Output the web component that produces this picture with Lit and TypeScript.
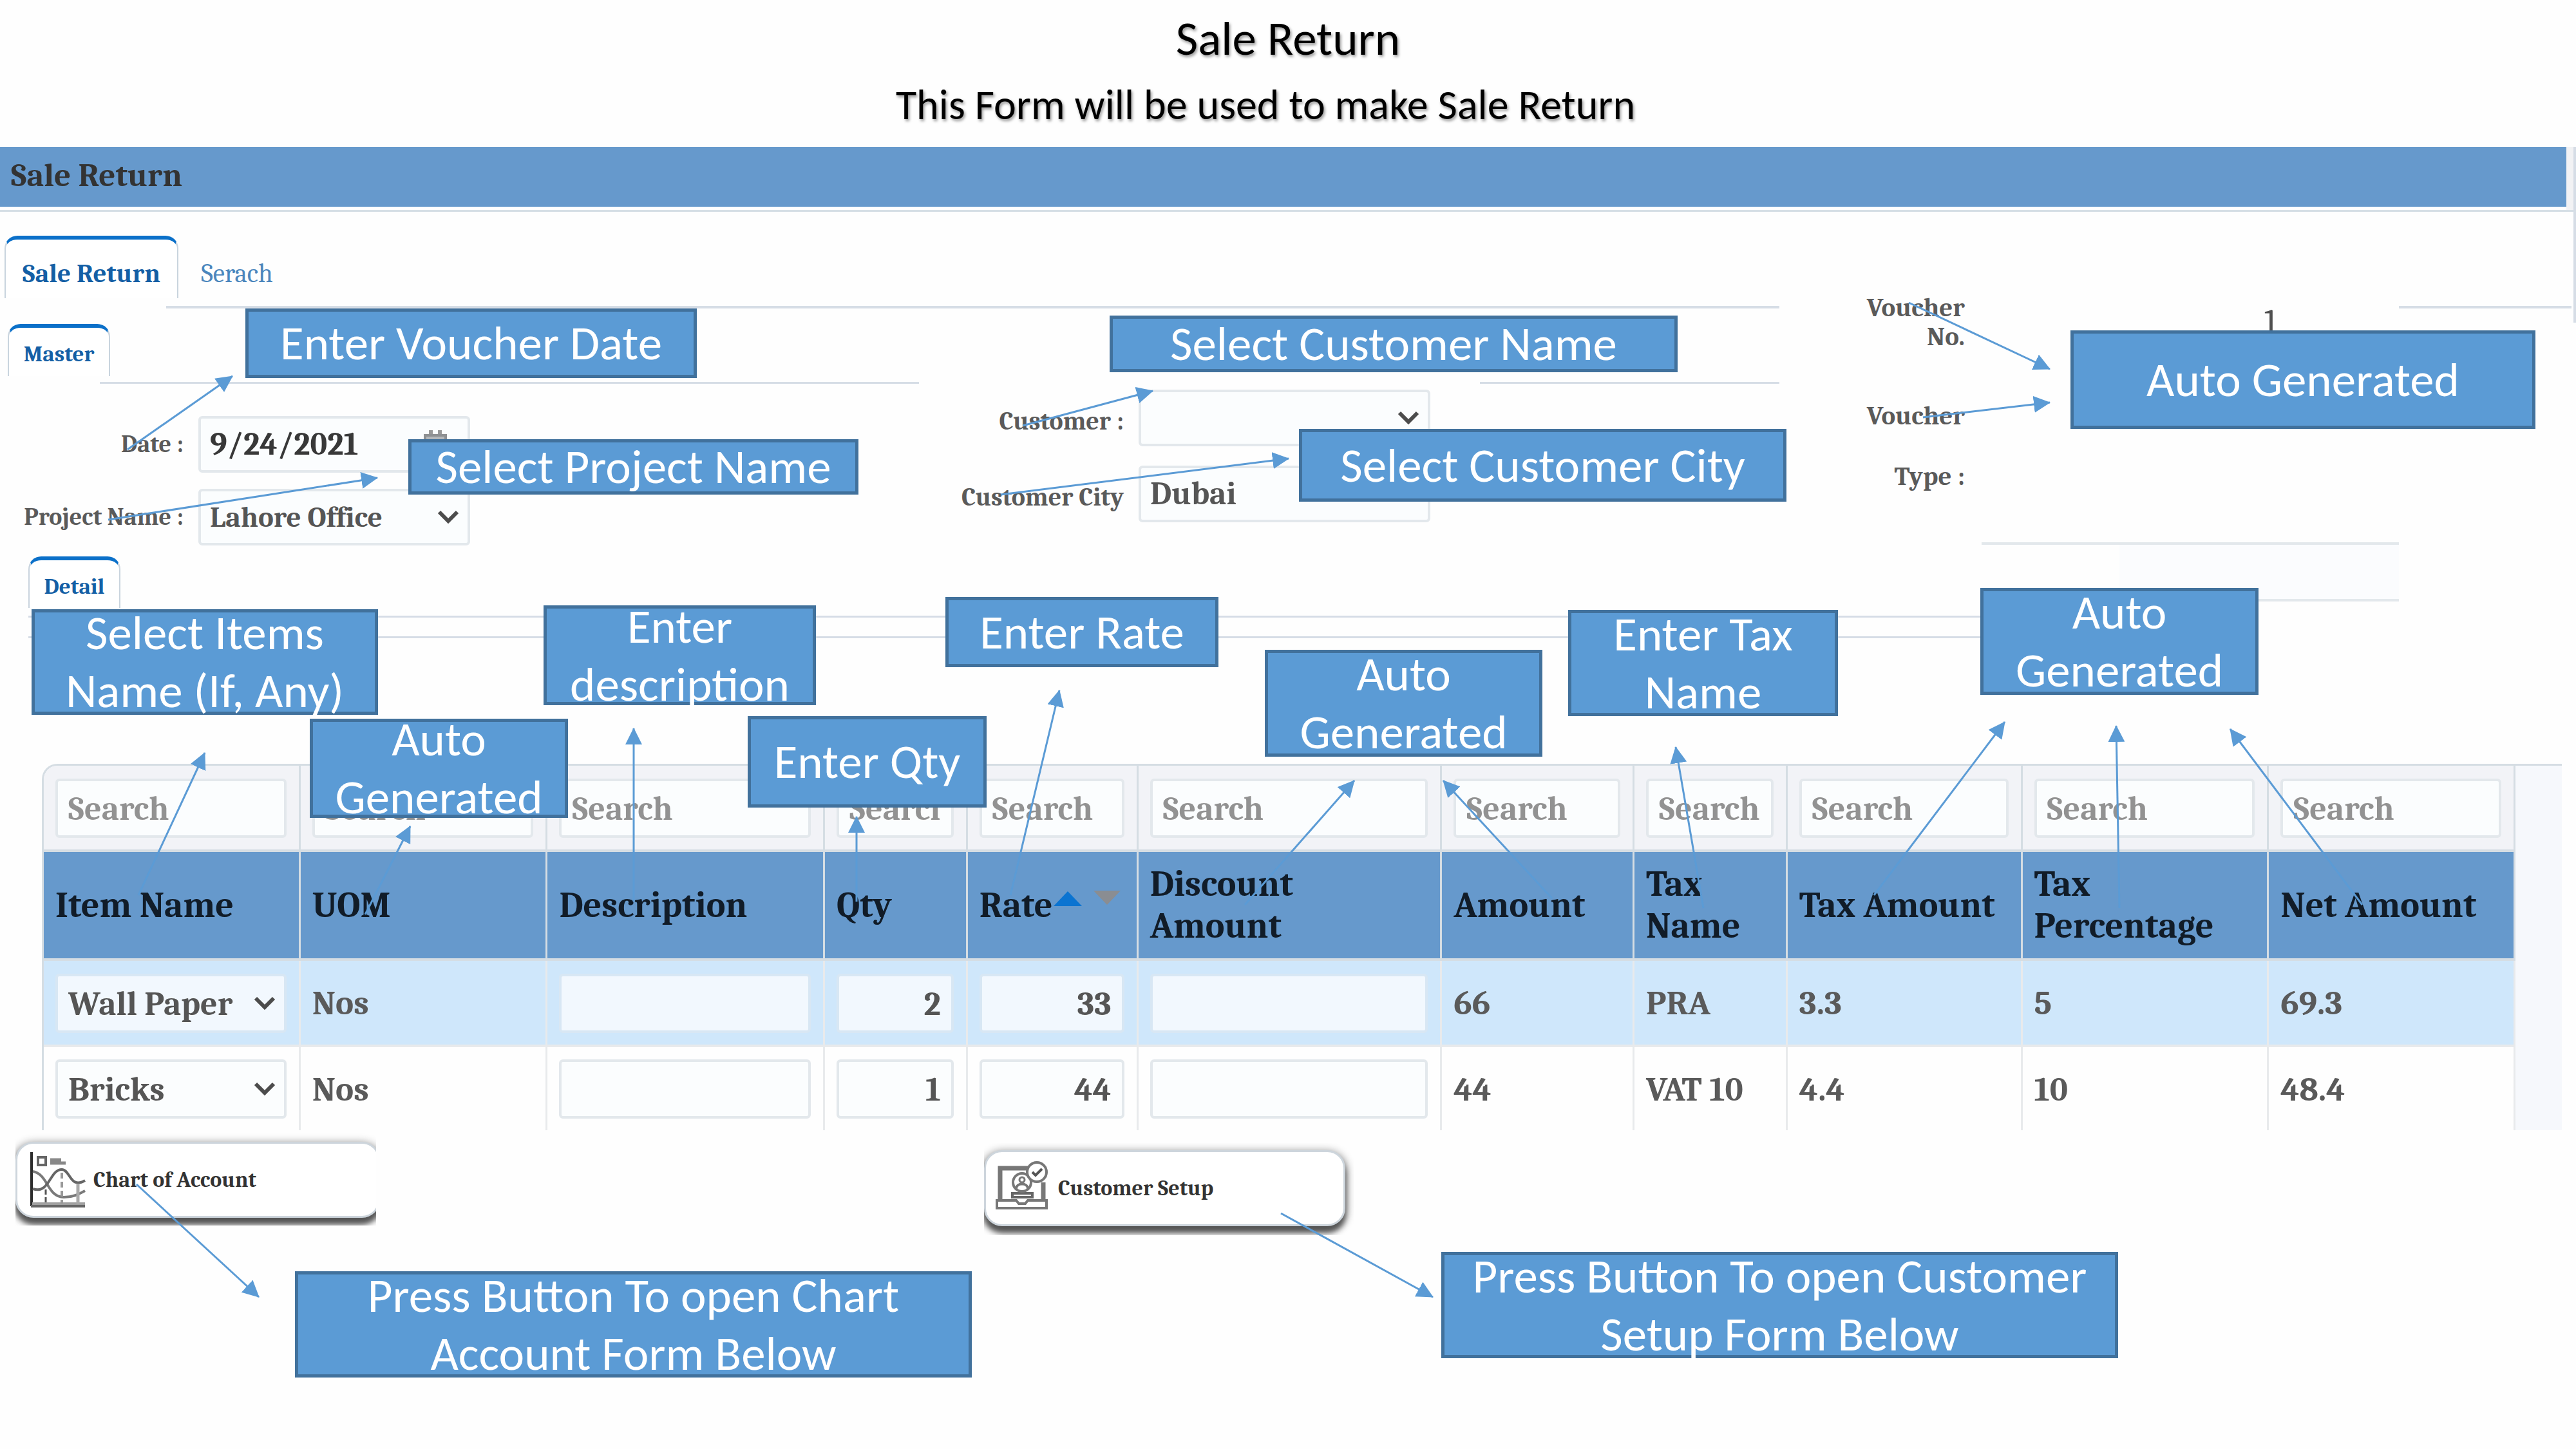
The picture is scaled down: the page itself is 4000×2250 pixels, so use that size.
import { LitElement, html, svg, css, nothing } from "lit";
import { customElement } from "lit/decorators.js";

interface Callout { x: number; y: number; w: number; h: number; lines: string[] }

const STAGE_WIDTH = 4000;

const callouts: Callout[] = [
  { x: 381, y: 479, w: 701, h: 108, lines: ["Enter Voucher Date"] },
  { x: 634, y: 682, w: 699, h: 86, lines: ["Select Project Name"] },
  { x: 1723, y: 490, w: 882, h: 88, lines: ["Select Customer Name"] },
  { x: 2017, y: 666, w: 757, h: 113, lines: ["Select Customer City"] },
  { x: 3215, y: 513, w: 722, h: 153, lines: ["Auto Generated"] },
  { x: 49, y: 946, w: 538, h: 164, lines: ["Select Items", "Name (If, Any)"] },
  { x: 481, y: 1116, w: 401, h: 154, lines: ["Auto", "Generated"] },
  { x: 844, y: 940, w: 423, h: 155, lines: ["Enter", "description"] },
  { x: 1161, y: 1112, w: 371, h: 142, lines: ["Enter Qty"] },
  { x: 1468, y: 927, w: 424, h: 109, lines: ["Enter Rate"] },
  { x: 1964, y: 1009, w: 431, h: 166, lines: ["Auto", "Generated"] },
  { x: 2435, y: 947, w: 419, h: 165, lines: ["Enter Tax", "Name"] },
  { x: 3075, y: 913, w: 432, h: 166, lines: ["Auto", "Generated"] },
  { x: 458, y: 1974, w: 1051, h: 165, lines: ["Press Button To open Chart", "Account Form Below"] },
  { x: 2238, y: 1944, w: 1051, h: 165, lines: ["Press Button To open Customer", "Setup Form Below"] },
];

// Each arrow runs from its first point to its second.
const arrows: number[][] = [
  [198, 698, 361, 584],
  [168, 807, 586, 742],
  [1588, 661, 1790, 607],
  [1554, 768, 2001, 712],
  [2964, 470, 3183, 573],
  [2986, 648, 3183, 625],
  [215, 1390, 318, 1169],
  [567, 1420, 637, 1283],
  [984, 1400, 984, 1131],
  [1330, 1400, 1330, 1268],
  [1569, 1390, 1645, 1072],
  [1933, 1405, 2103, 1212],
  [2410, 1395, 2241, 1212],
  [2645, 1410, 2602, 1160],
  [2910, 1390, 3113, 1121],
  [3291, 1410, 3286, 1127],
  [3668, 1405, 3463, 1132],
  [212, 1839, 402, 2014],
  [1989, 1884, 2225, 2014],
];

const columns = [
  { title: ["Item Name"], share: 399 },
  { title: ["UOM"], share: 384 },
  { title: ["Description"], share: 431 },
  { title: ["Qty"], share: 222 },
  { title: ["Rate"], share: 265, sorted: true },
  { title: ["Discount", "Amount"], share: 472 },
  { title: ["Amount"], share: 299 },
  { title: ["Tax", "Name"], share: 238 },
  { title: ["Tax Amount"], share: 365 },
  { title: ["Tax", "Percentage"], share: 383 },
  { title: ["Net Amount"], share: 383 },
];
const totalShare = columns.reduce((sum, c) => sum + c.share, 0);

const rows = [
  { item: "Wall Paper", uom: "Nos", qty: "2", rate: "33", amount: "66", tax: "PRA", taxAmount: "3.3", percent: "5", net: "69.3" },
  { item: "Bricks", uom: "Nos", qty: "1", rate: "44", amount: "44", tax: "VAT 10", taxAmount: "4.4", percent: "10", net: "48.4" },
];

const chevron = html`<svg class="chevron" viewBox="0 0 36 24" aria-hidden="true">
  <path d="M4 4 L18 18 L32 4" fill="none" stroke="#4c4c4c" stroke-width="6" />
</svg>`;

const chartIcon = html`<svg class="icon" viewBox="0 0 86 86" aria-hidden="true" fill="none">
  <path d="M2 0 V84" stroke="#2c2c2c" stroke-width="4" />
  <path d="M3 80 H85" stroke="#a0a0a0" stroke-width="4" />
  <path d="M1 84 H85" stroke="#666" stroke-width="4" />
  <rect x="12" y="8" width="12" height="12" stroke="#666" stroke-width="4" />
  <path d="M31 12 H48 M31 17 H55" stroke="#888" stroke-width="5" />
  <path d="M4 30 C28 34 26 70 52 70 C66 70 74 66 85 60" stroke="#7a7a7a" stroke-width="4" />
  <path d="M4 57 C30 66 30 27 49 27 C62 27 62 58 85 44" stroke="#666" stroke-width="4" />
  <path d="M24 58 V80" stroke="#555" stroke-width="3" stroke-dasharray="8 4" />
  <path d="M49 32 V80" stroke="#999" stroke-width="4" stroke-dasharray="9 5" />
  <path d="M74 50 V80" stroke="#aaa" stroke-width="5" />
</svg>`;

const customerIcon = html`<svg class="icon" viewBox="0 0 86 86" aria-hidden="true" fill="none">
  <path d="M8 62 V12 H56" stroke="#777" stroke-width="7" />
  <path d="M75 34 V62" stroke="#777" stroke-width="7" />
  <path d="M3 62 H33 L37 67 H47 L51 62 H80 V74 H3 Z" stroke="#777" stroke-width="4" />
  <path d="M27 51 H58 V57 H27 Z" stroke="#666" stroke-width="4" />
  <circle cx="42" cy="34" r="14" fill="#fff" stroke="#777" stroke-width="4" />
  <circle cx="42" cy="30" r="4" stroke="#777" stroke-width="3" />
  <path d="M33 44 C33 34 51 34 51 44" stroke="#777" stroke-width="4" />
  <circle cx="65" cy="18" r="15" fill="#fff" stroke="#777" stroke-width="4" />
  <path d="M58 18 L63 23 L73 13" stroke="#555" stroke-width="4" />
</svg>`;

@customElement("app-root")
export class AppRoot extends LitElement {
  static styles = css`
    :host {
      display: block;
      --sans: Carlito, Lato, sans-serif;
      --serif: Caladea, Cambria, "DejaVu Serif Condensed", "DejaVu Serif", serif;
      font-family: var(--serif);
      color: #5a5a5a;
      background: #fff;
    }
    * { box-sizing: border-box; }
    h1, h2, p { margin: 0; font-weight: 400; }
    .stage { position: relative; min-height: 100vh; overflow: hidden; background: #fefefe; }

    .intro { display: flex; flex-direction: column; align-items: center; height: 228px; padding-top: 9px; font-family: var(--sans); color: #000; text-shadow: 2px 3px 4px #0006; }
    .intro h1 { font-size: 75px; line-height: 102px; }
    .intro p { padding-right: 70px; font-size: 66px; line-height: 104px; }

    .titlebar { display: flex; border-right: 4px solid #d6dde6; border-bottom: 3px solid #d6dfe6; background: #f2f2f4; }
    .titlebar h2 { flex: 1; margin-right: 11px; height: 93px; padding-left: 17px; background: #6699cc; box-shadow: 0 5px 0 #fff; color: #333; font-size: 51px; font-weight: 700; line-height: 90px; margin-bottom: 5px; }

    .form { display: grid; grid-template-columns: minmax(0, 2763fr) minmax(0, 1237fr); }
    .tabs { display: flex; }
    .tab { border: 2px solid #c9d4de; border-top: 6px solid #0b70c9; border-bottom: 0; border-radius: 20px 20px 0 0; background: #fff; color: #145fa5; font: 700 35px var(--serif); padding: 6px 0 0; white-space: nowrap; }
    .tab.large { width: 270px; height: 97px; padding-top: 14px; font-size: 41px; }
    .tab.plain { width: 182px; border-color: transparent; background: none; color: #4a86bd; font-weight: 400; }
    .tab.medium { width: 159px; height: 81px; }
    .tab.small { width: 143px; height: 80px; }
    .main-tabs { padding: 37px 0 12px 7px; }
    .master-tabs { padding: 24px 0 9px 12px; }
    .detail-tabs { padding: 17px 0 0 44px; }
    .rule { height: 4px; background: #d6dde6; }
    .main-rule { margin-left: 258px; }
    .rules { display: grid; grid-template-columns: 155fr 1272fr 871fr 465fr; }
    .rules .first { grid-column: 2; }
    .rules .last { grid-column: 4; }
    .thin { height: 3px; }

    .fields { display: grid; grid-template-columns: 730fr 1491fr 542fr; align-items: start; }
    .group { display: grid; align-items: center; }
    .group.left { grid-template-columns: minmax(0, 308fr) minmax(0, 422fr); row-gap: 25px; padding-top: 50px; }
    .group.right { grid-template-columns: minmax(0, 1038fr) minmax(0, 453fr); row-gap: 30px; padding-top: 9px; }
    .label { padding-right: 23px; text-align: right; font-size: 38px; font-weight: 700; line-height: 40px; color: #5a5a5a; white-space: nowrap; }
    .group.right .label { padding-top: 10px; font-size: 40px; }

    .control { display: grid; align-items: center; min-width: 0; }
    .control > * { grid-area: 1 / 1; }
    .box { display: block; width: 100%; min-width: 0; height: 88px; margin: 0; padding: 0 14px; border: 4px solid #e3e8ec; border-radius: 6px; background: #fbfdfe; color: #555; font: 700 50px var(--serif); appearance: none; outline: 0; }
    .date { color: #383838; }
    .group.left select.box { font-size: 45px; }
    .chevron { justify-self: end; width: 36px; height: 24px; margin-right: 16px; pointer-events: none; }
    .calendar { justify-self: end; width: 36px; height: 44px; margin-right: 36px; }

    .voucher { grid-row: 1 / 3; grid-column: 2; display: grid; grid-template-columns: minmax(0, 288fr) minmax(0, 26fr) minmax(0, 648fr) minmax(0, 268fr) minmax(0, 7fr); align-content: start; padding-top: 126px; background: linear-gradient(#d6dde6, #d6dde6) right top / 4px 172px no-repeat; }
    .voucher-label { grid-column: 1; text-align: right; font-size: 41px; font-weight: 700; color: #5a5a5a; line-height: 45px; }
    .voucher-label.tall { grid-row: 2; line-height: 94px; margin-top: 54px; }
    .voucher-no { grid-column: 3; width: 100%; height: 90px; padding: 0 190px 0 0; border: 0; background: none; color: #505050; text-align: right; font: 400 54px var(--serif); }
    .voucher .rule { grid-column: 4; margin-top: 20px; }
    .voucher-type { grid-row: 3; grid-column: 3; height: 92px; margin-top: 55px; border-width: 4px 0; border-radius: 0; background: linear-gradient(90deg, #fefefe 33%, #fbfcfe 33%); }

    .detail-lines { display: flex; flex-direction: column; gap: 29px; width: 78%; margin: 12px 0 195px 44px; }

    .grid { display: flex; margin: 0 22px 0 65px; border-top: 3px solid #d5dde3; border-left: 3px solid #d5dde3; border-radius: 24px 0 0 0; overflow: hidden; background: #f6f8fc; }
    .grid::after { content: ""; flex: 0 0 72px; }
    table { flex: 1; width: 100%; table-layout: fixed; border-collapse: separate; border-spacing: 0; text-align: left; }
    th, td { padding: 1px 19px 0 18px; border-right: 3px solid #d5dde3; border-bottom: 4px solid #d5dde3; font-size: 53px; font-weight: 700; line-height: 65px; white-space: nowrap; }
    .search-row td { height: 134px; background: #f2f3f7; }
    .head-row th { height: 169px; background: #6699cc; color: #111c28; font-size: 56px; font-weight: 700; }
    .data-row td { height: 134px; background: #fefefe; border-color: #e8eaec; }
    .data-row.active td { background: #cfe7fb; }
    .data-row:last-child td { height: 129px; border-bottom: 0; }
    td .box { height: 92px; padding: 2px 16px 0; font-size: 52px; }
    .active .box { background: #f2f8fe; border-color: #d8e7f4; }
    .box::placeholder { color: #929292; opacity: 1; font-weight: 700; }
    .number { text-align: right; }
    .sort { display: inline-block; width: 104px; height: 26px; vertical-align: 16px; margin-left: 2px; }

    .shortcuts { display: flex; align-items: flex-start; gap: 944px; padding: 5px 0 0 24px; }
    .clip { overflow: hidden; width: 560px; height: 143px; padding-top: 13px; }
    .clip.second { width: 574px; margin-top: 15px; padding-top: 11px; }
    .shortcut { display: flex; align-items: center; gap: 12px; width: 566px; height: 118px; padding: 0 20px; border: 3px solid #cdd5dc; border-radius: 28px; background: #fff; box-shadow: 0 10px 8px 0 #555, 0 4px 14px 2px #888; color: #333; font: 700 34px var(--serif); }
    .second .shortcut { width: 561px; padding-left: 14px; }
    .icon { width: 86px; height: 86px; }

    .arrows { position: absolute; left: 0; top: 0; width: 100%; height: 2250px; pointer-events: none; }
    .callout { position: absolute; display: flex; flex-direction: column; justify-content: center; border: 5px solid #41719c; background: #5b9bd5; color: #fff; font: 400 75px/90px var(--sans); text-align: center; white-space: nowrap; }
  `;

  private search(title: string) {
    return html`<td><input class="box" type="text" placeholder="Search" aria-label=${"Search " + title} /></td>`;
  }

  private select(id: string, value: string, label?: string) {
    return html`<div class="control">
      <select class="box" id=${id} aria-label=${label ?? nothing}><option>${value}</option></select>${chevron}
    </div>`;
  }

  private entry(label: string, value = "") {
    return html`<td><input class="box number" type="text" .value=${value} aria-label=${label} /></td>`;
  }

  private row(r: (typeof rows)[number], i: number) {
    return html`<tr class="data-row ${i === 0 ? "active" : ""}">
      <td>${this.select("item-" + i, r.item, "Item Name")}</td>
      <td>${r.uom}</td>
      ${this.entry("Description")}${this.entry("Qty", r.qty)}${this.entry("Rate", r.rate)}${this.entry("Discount Amount")}
      <td>${r.amount}</td><td>${r.tax}</td><td>${r.taxAmount}</td><td>${r.percent}</td><td>${r.net}</td>
    </tr>`;
  }

  render() {
    return html`<main class="stage">
      <header class="intro">
        <h1>Sale Return</h1>
        <p>This Form will be used to make Sale Return</p>
      </header>
      <div class="titlebar"><h2>Sale Return</h2></div>

      <section class="form">
        <div>
          <nav class="tabs main-tabs">
            <button class="tab large">Sale Return</button>
            <button class="tab large plain">Serach</button>
          </nav>
          <div class="rule main-rule"></div>
          <nav class="tabs master-tabs"><button class="tab medium">Master</button></nav>
          <div class="rules"><div class="rule thin first"></div><div class="rule thin last"></div></div>
          <div class="fields">
            <div class="group left">
              <label class="label" for="date">Date :</label>
              <div class="control">
                <input class="box date" id="date" type="text" .value=${"9/24/2021"} />
                <svg class="calendar" viewBox="0 0 36 44" aria-hidden="true">
                  <path d="M8 0 h6 v8 h-6 z M22 0 h6 v8 h-6 z" fill="#999" />
                  <rect x="2" y="8" width="32" height="34" fill="#b5b8ba" stroke="#8e9092" stroke-width="4" />
                </svg>
              </div>
              <label class="label" for="project">Project Name :</label>
              ${this.select("project", "Lahore Office")}
            </div>
            <div class="group right">
              <label class="label" for="customer">Customer :</label>
              ${this.select("customer", "")}
              <label class="label" for="city">Customer City</label>
              ${this.select("city", "Dubai")}
            </div>
          </div>
        </div>

        <div class="voucher">
          <label class="voucher-label" for="voucher-no">Voucher<br />No.</label>
          <input class="voucher-no" id="voucher-no" readonly .value=${"1"} />
          <div class="rule"></div>
          <label class="voucher-label tall" for="voucher-type">Voucher<br />Type :</label>
          <input class="box voucher-type" id="voucher-type" readonly />
        </div>

        <nav class="tabs detail-tabs"><button class="tab small">Detail</button></nav>
      </section>

      <div class="detail-lines"><div class="rule thin"></div><div class="rule thin"></div></div>

      <div class="grid">
        <table>
          <colgroup>${columns.map((c) => html`<col style="width:${(c.share / totalShare) * 100}%" />`)}</colgroup>
          <thead>
            <tr class="search-row">${columns.map((c) => this.search(c.title.join(" ")))}</tr>
            <tr class="head-row">${columns.map((c) => html`<th scope="col">${c.title.map((t, i) => html`${i ? html`<br />` : nothing}${t}`)}${c.sorted
              ? html`<svg class="sort" viewBox="0 0 104 26" aria-hidden="true"><path d="M0 25 L22 2 L44 25 Z" fill="#0b74d1" /><path d="M62 1 H104 L83 23 Z" fill="#8a8d92" /></svg>`
              : nothing}</th>`)}</tr>
          </thead>
          <tbody>${rows.map((r, i) => this.row(r, i))}</tbody>
        </table>
      </div>

      <div class="shortcuts">
        <div class="clip"><button class="shortcut">${chartIcon}Chart of Account</button></div>
        <div class="clip second"><button class="shortcut">${customerIcon}Customer Setup</button></div>
      </div>

      <svg class="arrows" viewBox="0 0 4000 2250" preserveAspectRatio="none" aria-hidden="true">
        <defs>
          <marker id="head" viewBox="0 0 26 26" refX="25" refY="13" markerWidth="26" markerHeight="26" markerUnits="userSpaceOnUse" orient="auto">
            <path d="M0 0 L26 13 L0 26 Z" fill="#5b9bd5" />
          </marker>
        </defs>
        ${arrows.map(([x1, y1, x2, y2]) => svg`<line x1=${x1} y1=${y1} x2=${x2} y2=${y2} stroke="#5b9bd5" stroke-width="3" marker-end="url(#head)" />`)}
      </svg>

      ${callouts.map((c) => html`<div class="callout" style="left:${(c.x / STAGE_WIDTH) * 100}%;top:${c.y}px;width:${(c.w / STAGE_WIDTH) * 100}%;height:${c.h}px">
        ${c.lines.map((l) => html`<span>${l}</span>`)}
      </div>`)}
    </main>`;
  }
}
